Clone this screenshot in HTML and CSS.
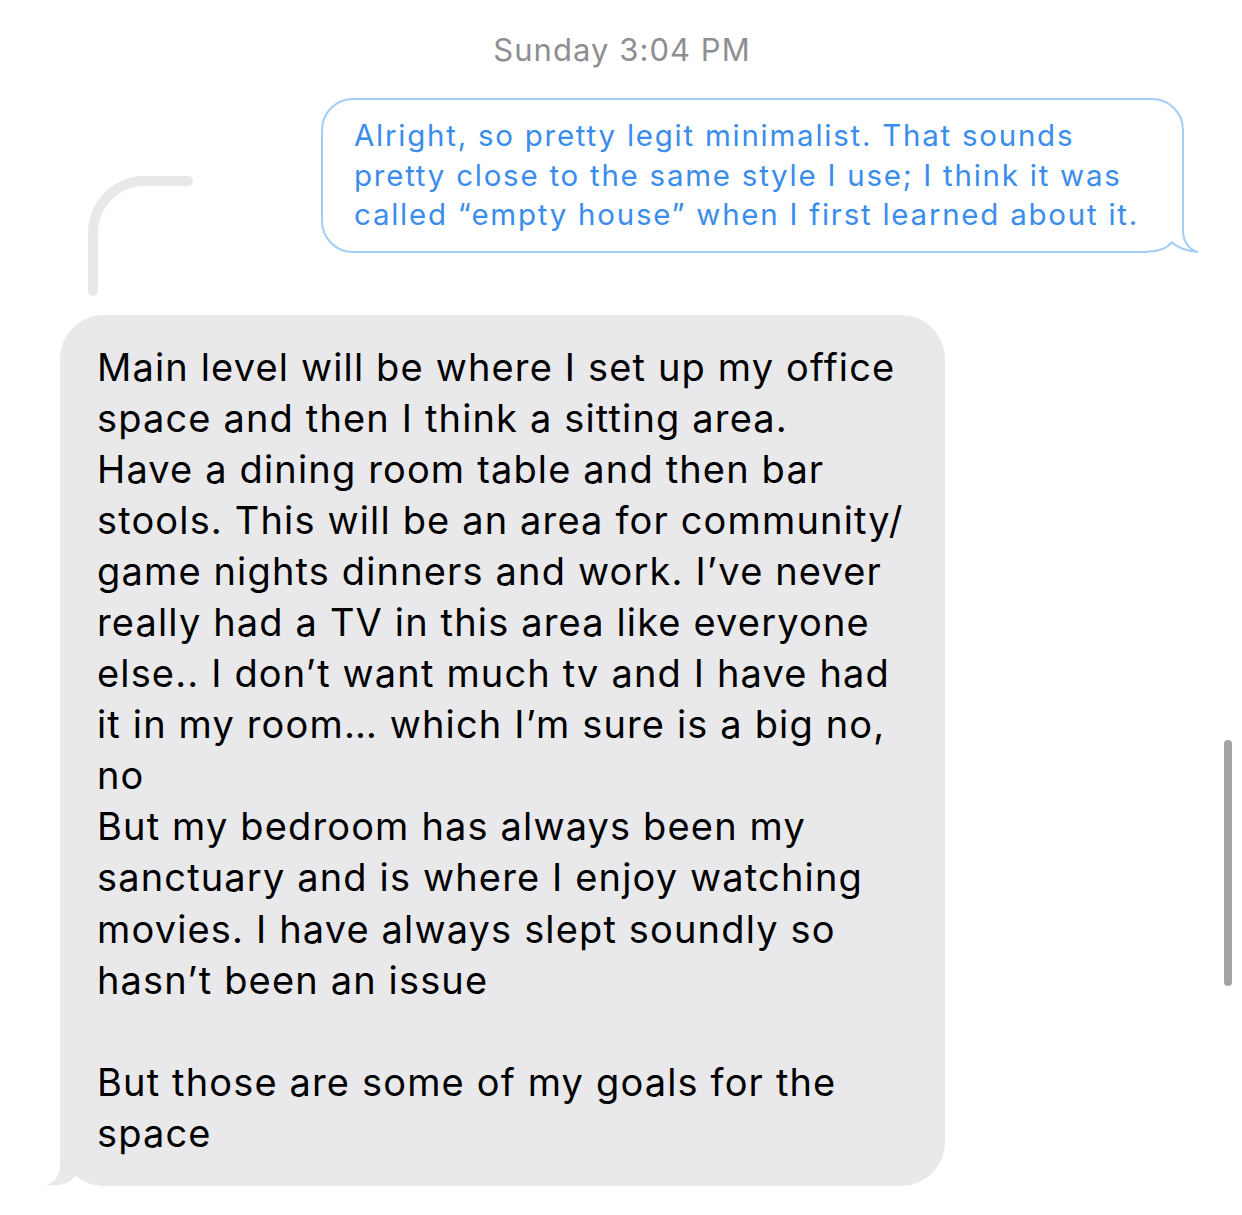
FILE: index.html
```html
<!DOCTYPE html>
<html lang="en">
<head>
<meta charset="utf-8">
<title>Messages</title>
<link rel="stylesheet" href="styles.css">
</head>
<body>
<main class="thread">
  <div class="timestamp"><span class="day">Sunday</span> 3:04 PM</div>

  <div class="row row-sent">
    <div class="bubble bubble-sent">
      <p class="text">Alright, so pretty legit minimalist. That sounds<br>
      pretty close to the same style I use; I think it was<br>
      called “empty house” when I first learned about it.</p>
      <svg class="tail-sent" width="52" height="42" viewBox="0 0 52 42" aria-hidden="true">
        <path d="M0 2 H36.5 V41 H0 Z" fill="#fff"/>
        <path d="M0 38.5 Q16 38.5 24 29.5 Q32 37 50 39 C42 37 35 30 35 17 V0" fill="#fff" stroke="#a3cdf6" stroke-width="2"/>
      </svg>
    </div>
  </div>

  <div class="row row-received">
    <svg class="reply-line" width="116" height="130" viewBox="0 0 116 130" aria-hidden="true">
      <path d="M10 120 V62 A52 52 0 0 1 62 10 H105" fill="none" stroke="#e8e8ea" stroke-width="10" stroke-linecap="round"/>
    </svg>
    <div class="bubble bubble-received">
      <svg class="tail-received" width="72" height="48" viewBox="0 0 72 48" aria-hidden="true">
        <path d="M20 0 V26 C20 38 14 44 5 46 Q16 47 24 45 Q32 42 38 34 Q48 46 66 47 H72 V0 Z" fill="#e9e9eb"/>
      </svg>
      <p class="text">Main level will be where I set up my office<br>
      space and then I think a sitting area.<br>
      Have a dining room table and then bar<br>
      stools. This will be an area for community/<br>
      game nights dinners and work. I’ve never<br>
      really had a TV in this area like everyone<br>
      else.. I don’t want much tv and I have had<br>
      it in my room… which I’m sure is a big no,<br>
      no<br>
      But my bedroom has always been my<br>
      sanctuary and is where I enjoy watching<br>
      movies. I have always slept soundly so<br>
      hasn’t been an issue<br>
      <br>
      But those are some of my goals for the<br>
      space</p>
    </div>
  </div>
</main>
<div class="scrollbar"></div>
</body>
</html>
```

FILE: styles.css
```css
html, body {
  margin: 0;
  padding: 0;
  background: #ffffff;
}

body {
  width: 1242px;
  height: 1215px;
  overflow: hidden;
  position: relative;
  font-family: Inter, "Noto Sans", "Liberation Sans", sans-serif;
  -webkit-font-smoothing: antialiased;
}

.thread {
  display: flex;
  flex-direction: column;
  padding-top: 31px;
}

.timestamp {
  text-align: center;
  font-size: 31px;
  line-height: 38px;
  letter-spacing: 1.05px;
  color: #8e8e93;
  padding-left: 2px;
}

.row {
  display: flex;
}

.row-sent {
  justify-content: flex-end;
  padding-right: 58px;
  margin-top: 29px;
}

.bubble {
  position: relative;
  white-space: nowrap;
}

.text {
  position: relative;
  z-index: 1;
  margin: 0;
}

.bubble-sent {
  box-sizing: border-box;
  width: 863px;
  height: 155px;
  border: 2px solid #a3cdf6;
  border-radius: 32px;
  padding: 16px 10px 0 31px;
  font-size: 29.5px;
  line-height: 39.5px;
  letter-spacing: 1.75px;
  color: #3a8ced;
}

.tail-sent {
  position: absolute;
  right: -18px;
  bottom: -4px;
}

.row-received {
  position: relative;
  justify-content: flex-start;
  padding-left: 60px;
  margin-top: 62px;
}

.reply-line {
  position: absolute;
  left: 83px;
  top: -144px;
}

.bubble-received {
  box-sizing: border-box;
  width: 885px;
  height: 871px;
  background: #e9e9eb;
  border-radius: 44px;
  padding: 27px 10px 0 37px;
  font-size: 38px;
  line-height: 51.05px;
  letter-spacing: 1.15px;
  color: #000000;
}

.tail-received {
  position: absolute;
  left: -20px;
  bottom: -1px;
  z-index: 0;
}

.scrollbar {
  position: absolute;
  left: 1224px;
  top: 740px;
  width: 8px;
  height: 246px;
  border-radius: 4px;
  background: #a4a4a6;
}
```
